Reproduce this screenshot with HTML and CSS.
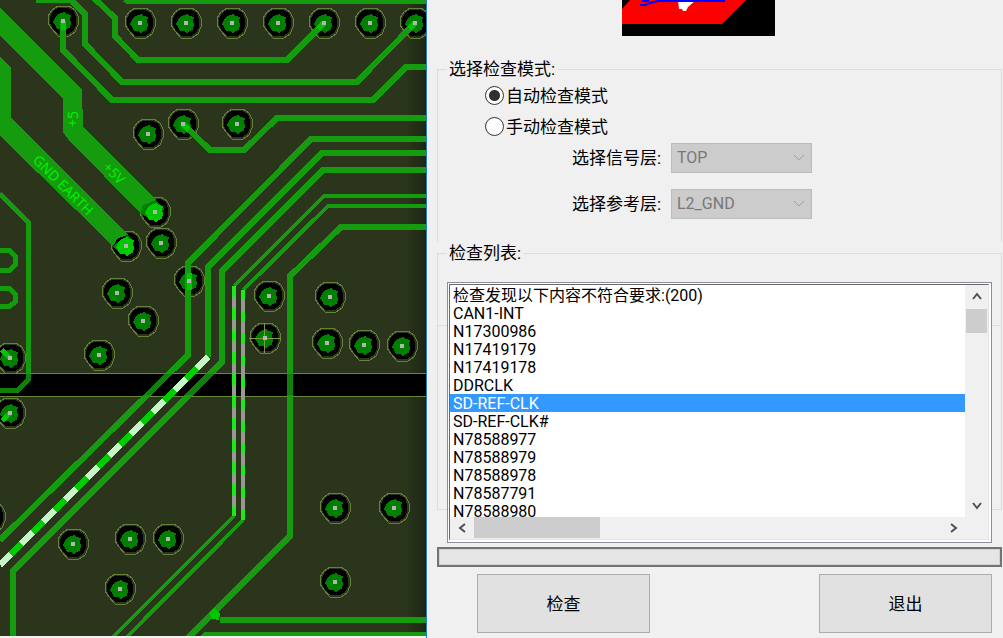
FILE: index.html
```html
<!DOCTYPE html>
<html lang="zh-CN">
<head>
<meta charset="utf-8">
<title>检查</title>
<link rel="stylesheet" href="styles.css">
</head>
<body>
<main class="app">
  <section class="board" aria-label="PCB">
    <svg class="board-view" viewBox="0 0 426 636" preserveAspectRatio="xMinYMin slice">
      <defs>
        <g id="via">
          <path class="ring" d="M-5-15H6L12-11 15-5V4L12 11 6 15H-5L-11 8-15 2V-5L-11-11Z"/>
          <path class="hole" d="M-5-13H5L11-10 13-4V4L10 10 5 13H-5L-10 8-13 2V-4L-10-10Z"/>
          <path class="pad" d="M-5-7-1-8 1-9 4-7 8-6 7-2 8 2 7 7 3 8 1 10-2 8-6 8-8 4-10 1-8-3Z"/>
        </g>
        <path id="lit" class="lit" d="M-5-7-1-8 1-9 4-7 8-6 7-2 8 2 7 7 3 8 1 10-2 8-6 8-8 4-10 1-8-3Z"/>
        <path id="pin" class="pin" d="M-2-2H2V2H-2Z"/>
        <linearGradient id="edge"><stop offset="0" stop-color="#10180c" stop-opacity="0"/><stop offset="1" stop-color="#10180c" stop-opacity=".5"/></linearGradient>
      </defs>
      <rect class="plane" width="426" height="636"/>
      <rect x="406" width="20" height="636" fill="url(#edge)"/>
      <rect class="gap" x="-2" y="373" width="430" height="23"/>

      <use href="#via" x="63" y="21"/><use href="#via" x="140" y="23"/><use href="#via" x="186" y="23"/>
      <use href="#via" x="232" y="23"/><use href="#via" x="278" y="23"/><use href="#via" x="324" y="23"/>
      <use href="#via" x="370" y="23"/><use href="#via" x="415" y="23"/><use href="#via" x="148" y="134"/>
      <use href="#via" x="183" y="124"/><use href="#via" x="237" y="124"/><use href="#via" x="155" y="212"/>
      <use href="#via" x="126" y="246"/><use href="#via" x="161" y="243"/><use href="#via" x="189" y="281"/>
      <use href="#via" x="117" y="293"/><use href="#via" x="143" y="321"/><use href="#via" x="99" y="355"/>
      <use href="#via" x="10" y="358"/><use href="#via" x="10" y="413"/><use href="#via" x="269" y="296"/>
      <use href="#via" x="330" y="297"/><use href="#via" x="265" y="338"/><use href="#via" x="327" y="343"/>
      <use href="#via" x="364" y="345"/><use href="#via" x="402" y="346"/><use href="#via" x="335" y="508"/>
      <use href="#via" x="394" y="508"/><use href="#via" x="335" y="582"/><use href="#via" x="73" y="544"/>
      <use href="#via" x="130" y="539"/><use href="#via" x="168" y="539"/><use href="#via" x="120" y="589"/>
      <use href="#via" x="-10" y="517"/>

      <path class="copper" d="M0 8 82 89 83 127 156 200 147 204 142 210 141 214 68 139 63 132V99L0 36Z"/>
      <path class="copper" d="M0 57 11 68V118L128 235 118 238 113 246 0 136Z"/>
      <path class="over-hole" d="M156 200 164 209 155 221 141 214 142 206Z"/>
      <path class="over-hole" d="M128 235 134 242 120 254 113 246Z"/>

      <g class="trace">
        <path d="M36 0H71L85 14V44L122 82H357L415 23"/>
        <path d="M63 21V50L112 100H373L406 67H426"/>
        <path d="M94-2 115 18V36L138 60H287L324 23"/>
        <path d="M125-1 128 1H426"/>
        <path d="M183 124 210 150H244L277 118H426"/>
        <path d="M426 139H311L188 263V355L0 540"/>
        <path d="M426 153H322L208 267V357"/>
        <path d="M426 170H323L222 271V362L13 571V636"/>
        <path d="M426 227H341L290 276V536L188 638"/>
        <path d="M220 620H426"/>
      </g>
      <g class="trace mid">
        <path d="M0 194 28 222V380L18 390H0"/>
        <path d="M0 250H9L15 256V265L10 270H0M0 288H9L15 294V302L10 306H0"/>
        <path d="M202 638 206 634H426"/>
      </g>
      <g class="trace thin">
        <path d="M426 196H324L234 286"/>
        <path d="M426 206H328L243 290"/>
        <path d="M234 516 112 638M243 520 126 638"/>
      </g>

      <rect class="shade" y="374" width="426" height="21"/>
      <path class="glow" d="M63 21V30M324 23 318 29M415 23 409 29M183 124 189 130M189 273V290M10 358 2 350M10 413 2 421"/>
      <use href="#lit" x="155" y="212"/><use href="#lit" x="126" y="246"/>
      <path class="lit" d="M215 608 220 614 219 620 212 619 209 613Z"/>

      <path class="net" d="M208 357 0 565"/>
      <path class="net-dash" d="M208 357 0 565"/>
      <path class="pair" d="M234 286V516M243 290V520"/>
      <path class="pair-dash" d="M234 297V516M243 300V520"/>
      <path class="cross" d="M249 338H281M264 323V353"/>

      <g>
        <use href="#pin" x="63" y="21"/><use href="#pin" x="140" y="23"/><use href="#pin" x="186" y="23"/>
        <use href="#pin" x="232" y="23"/><use href="#pin" x="278" y="23"/><use href="#pin" x="324" y="23"/>
        <use href="#pin" x="370" y="23"/><use href="#pin" x="415" y="23"/><use href="#pin" x="148" y="134"/>
        <use href="#pin" x="183" y="124"/><use href="#pin" x="237" y="124"/><use href="#pin" x="155" y="212"/>
        <use href="#pin" x="126" y="246"/><use href="#pin" x="161" y="243"/><use href="#pin" x="189" y="281"/>
        <use href="#pin" x="117" y="293"/><use href="#pin" x="143" y="321"/><use href="#pin" x="99" y="355"/>
        <use href="#pin" x="10" y="358"/><use href="#pin" x="10" y="413"/><use href="#pin" x="269" y="296"/>
        <use href="#pin" x="330" y="297"/><use href="#pin" x="265" y="338"/><use href="#pin" x="327" y="343"/>
        <use href="#pin" x="364" y="345"/><use href="#pin" x="402" y="346"/><use href="#pin" x="335" y="508"/>
        <use href="#pin" x="394" y="508"/><use href="#pin" x="335" y="582"/><use href="#pin" x="73" y="544"/>
        <use href="#pin" x="130" y="539"/><use href="#pin" x="168" y="539"/><use href="#pin" x="120" y="589"/>
      </g>

      <text class="silk" transform="translate(32 161) rotate(45)">GND EARTH</text>
      <text class="silk" transform="translate(102 168) rotate(45)">+5V</text>
      <text class="silk" transform="translate(78 127) rotate(-90)">+5</text>
    </svg>
  </section>

  <form class="panel">
    <svg class="preview" viewBox="0 0 153 36" aria-hidden="true">
      <path fill="#000" d="M0 0H153V36H0Z"/>
      <path fill="#f00" d="M0 9 8 0H124L100 24H0Z"/>
      <path fill="#fff" d="M56 0H74L66 7 64 11 61 11 60 9 57 9Z"/>
      <path fill="none" stroke="#00f" stroke-width="2" d="M18 5H23L28 3 36 1H103M20 1H27"/>
    </svg>

    <fieldset class="group modes">
      <legend>选择检查模式:</legend>
      <label class="mode"><input type="radio" name="mode" checked>自动检查模式</label>
      <label class="mode"><input type="radio" name="mode">手动检查模式</label>
      <div class="layer">
        <label for="signal">选择信号层:</label>
        <span class="combo">
          <select id="signal" disabled><option>TOP</option></select>
          <svg viewBox="0 0 12 8" aria-hidden="true"><path d="M1 1 6 6 11 1"/></svg>
        </span>
      </div>
      <div class="layer">
        <label for="reference">选择参考层:</label>
        <span class="combo">
          <select id="reference" disabled><option>L2_GND</option></select>
          <svg viewBox="0 0 12 8" aria-hidden="true"><path d="M1 1 6 6 11 1"/></svg>
        </span>
      </div>
    </fieldset>

    <div class="results">
      <fieldset class="group list-group"><legend>检查列表:</legend></fieldset>
      <div class="frame"></div>
      <div class="list">
        <div class="list-inner">
          <ul class="rows" role="listbox" aria-label="检查列表">
            <li role="option">检查发现以下内容不符合要求:(200)</li>
            <li role="option">CAN1-INT</li>
            <li role="option">N17300986</li>
            <li role="option">N17419179</li>
            <li role="option">N17419178</li>
            <li role="option">DDRCLK</li>
            <li class="selected" role="option" aria-selected="true">SD-REF-CLK</li>
            <li role="option">SD-REF-CLK#</li>
            <li role="option">N78588977</li>
            <li role="option">N78588979</li>
            <li role="option">N78588978</li>
            <li role="option">N78587791</li>
            <li role="option">N78588980</li>
          </ul>
          <div class="bar vertical">
            <button type="button" aria-label="向上"><svg viewBox="0 0 12 12"><path d="M2 9 6 4 10 9"/></svg></button>
            <span class="thumb"></span>
            <button type="button" aria-label="向下"><svg viewBox="0 0 12 12"><path d="M2 3 6 8 10 3"/></svg></button>
          </div>
          <div class="bar horizontal">
            <button type="button" aria-label="向左"><svg viewBox="0 0 12 12"><path d="M9 2 4 6 9 10"/></svg></button>
            <span class="thumb"></span>
            <button type="button" aria-label="向右"><svg viewBox="0 0 12 12"><path d="M3 2 8 6 3 10"/></svg></button>
          </div>
        </div>
      </div>
    </div>

    <progress class="progress" value="0" max="100" aria-label="检查"></progress>

    <div class="actions">
      <button type="button">检查</button>
      <button type="button">退出</button>
    </div>
  </form>
</main>
</body>
</html>
```

FILE: styles.css
```css
* {
  box-sizing: border-box;
}

body {
  margin: 0;
  background: #f0f0f0;
  color: #000;
  font: 17px/22px Roboto, "Noto Sans CJK SC", sans-serif;
}

.app {
  display: flex;
  min-height: 100vh;
  overflow: hidden;
}

/* Board view */

.board {
  flex: 427 1 0;
  display: flex;
  padding-bottom: 2px;
  border-right: 1px solid #1f80d0;
}

.board-view {
  flex: 1;
  min-width: 0;
  height: calc(100vh - 2px);
  shape-rendering: crispEdges;
}

.plane { fill: #2a351b; }
.gap { fill: #000; stroke: #67873b; stroke-width: 1; }
.ring { fill: #2a351b; stroke: #64813a; stroke-width: 1; }
.hole { fill: #000; }
.pad { fill: #008000; }
.lit { fill: #00c800; }
.pin { fill: #b4b4b4; }
.copper { fill: #159c0e; }
.over-hole { fill: #008000; }

.trace {
  fill: none;
  stroke: #159c0e;
  stroke-width: 6;
}

.trace.mid { stroke-width: 5; }
.trace.thin { stroke-width: 4; }
.shade { fill: #000; opacity: .18; }
.glow { fill: none; stroke: #00c800; stroke-width: 5; }

.net { fill: none; stroke: #00cc00; stroke-width: 6; }
.net-dash { fill: none; stroke: #c8f5c8; stroke-width: 6; stroke-dasharray: 16 15; }
.pair { fill: none; stroke: #1cea1c; stroke-width: 4; }
.pair-dash { fill: none; stroke: #979a90; stroke-width: 4; stroke-dasharray: 11 11; }
.cross { fill: none; stroke: #7d9a42; stroke-width: 1; }

.silk {
  fill: #00f000;
  font: 14px "Noto Sans", sans-serif;
}

/* Dialog */

.panel {
  flex: 576 1 0;
  display: flex;
  flex-direction: column;
  min-width: 0;
  padding: 0 1px 5px 9px;
  border-left: 1px solid #fff;
}

.preview {
  width: 153px;
  height: 36px;
  margin: 0 0 22px 185px;
}

.group {
  min-width: 0;
  margin: 0;
  padding: 0;
  border: 1px solid #dcdcdc;
  border-bottom: 0;
}

legend {
  margin-left: 8px;
  padding: 0 3px;
}

.modes {
  padding-bottom: 23px;
}

.mode {
  display: flex;
  align-items: center;
  gap: 2px;
  height: 31px;
  margin-left: 47px;
}

.mode input {
  appearance: none;
  width: 19px;
  height: 19px;
  margin: 0;
  border: 1px solid #333;
  border-radius: 50%;
  background: #fff;
}

.mode input:checked {
  background: radial-gradient(circle, #303030 5px, #fff 6px);
}

.layer {
  display: flex;
  align-items: center;
  height: 30px;
  margin: 1px 0 0 134px;
}

.layer + .layer {
  margin-top: 16px;
}

.layer label {
  width: 99px;
}

.combo {
  display: grid;
  align-items: center;
  width: 141px;
}

.combo select,
.combo svg {
  grid-area: 1 / 1;
}

.combo select {
  appearance: none;
  width: 100%;
  height: 30px;
  padding: 0 5px;
  border: 1px solid #bcbcbc;
  border-radius: 0;
  background: #ccc;
  color: #787878;
  font: inherit;
  font-size: 16px;
  opacity: 1;
}

.combo svg {
  justify-self: end;
  width: 12px;
  height: 8px;
  margin-right: 7px;
  fill: none;
  stroke: #a0a0a0;
  stroke-width: 1;
  pointer-events: none;
}

/* Result list laid over the two group frames behind it */

.results {
  display: grid;
  grid-template-columns: 1fr;
  grid-template-rows: 83px 185px auto;
}

.list-group {
  grid-area: 1 / 1;
}

.frame {
  grid-area: 2 / 1;
  border: 1px solid #dcdcdc;
}

.list {
  grid-area: 1 / 1 / 4 / 2;
  margin: 40px 10px 0;
  padding: 1px 2px 2px 1px;
  border: 1px solid #8a8e9a;
  background: #fff;
}

.list-inner {
  display: grid;
  grid-template-columns: 1fr 23px;
  grid-template-rows: 232px 22px;
  border: 1px solid #e3e3e3;
  border-top-color: #696969;
  border-left-color: #696969;
  background: #f0f0f0;
}

.rows {
  margin: 0;
  padding: 1px 0 0;
  overflow: hidden;
  background: #fff;
  list-style: none;
  font-size: 16px;
  line-height: 20px;
}

.rows li {
  height: 18px;
  padding-left: 3px;
  white-space: nowrap;
}

.rows .selected {
  background: #3399ff;
  color: #fff;
}

.bar {
  display: flex;
  background: #f0f0f0;
}

.vertical {
  flex-direction: column;
}

.bar button {
  display: grid;
  place-items: center;
  width: 23px;
  height: 22px;
  padding: 0;
  border: 0;
  background: none;
}

.bar svg {
  width: 12px;
  height: 12px;
  fill: none;
  stroke: #505050;
  stroke-width: 2;
}

.bar .thumb {
  background: #cdcdcd;
}

.vertical .thumb {
  width: 21px;
  height: 24px;
  margin: 2px 0 auto 1px;
}

.horizontal .thumb {
  width: 126px;
  height: 21px;
  margin: 0 auto 0 1px;
}

.progress {
  appearance: none;
  width: 100%;
  height: 20px;
  margin-top: 4px;
  border: 2px solid #747474;
  background: #e6e6e6;
}

.progress::-webkit-progress-bar {
  border: 1px solid #d2d2d2;
  background: #e6e6e6;
}

.actions {
  display: flex;
  justify-content: space-between;
  margin-top: 7px;
  padding: 0 10px 0 40px;
}

.actions button {
  width: 173px;
  height: 59px;
  padding: 0;
  border: 1px solid #adadad;
  background: #e1e1e1;
  color: #000;
  font: inherit;
}
```
